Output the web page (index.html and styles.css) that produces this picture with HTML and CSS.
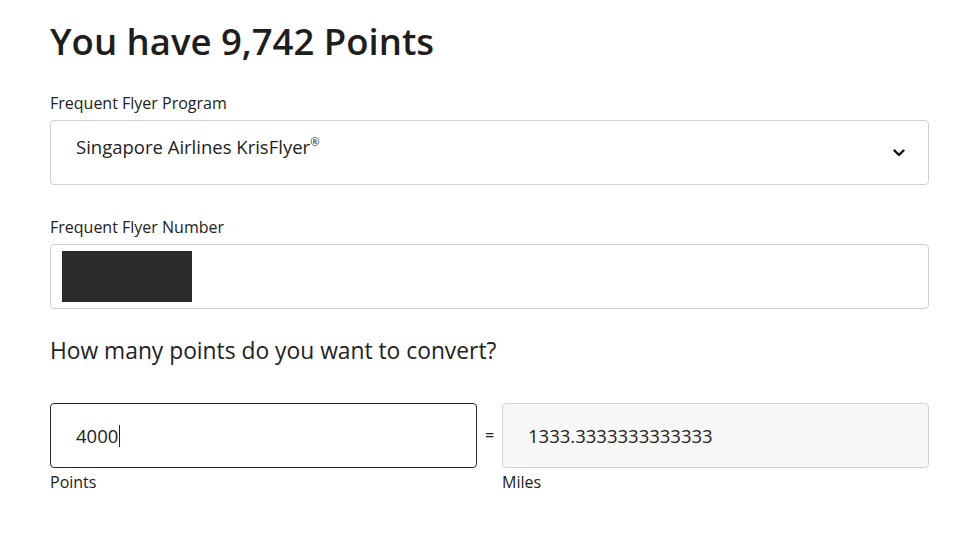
FILE: index.html
```html
<!DOCTYPE html>
<html>
<head>
<meta charset="utf-8">
<link rel="stylesheet" href="styles.css">
</head>
<body>
<main class="form">
  <h1 class="title">You have 9,742 Points</h1>

  <div class="field">
    <label class="label">Frequent Flyer Program</label>
    <div class="box select">
      <span class="value">Singapore Airlines KrisFlyer<sup class="reg">®</sup></span>
      <svg class="chev" width="12" height="8" viewBox="0 0 12 8"><path d="M1.5 1.5 L6 6 L10.5 1.5" fill="none" stroke="#111" stroke-width="2.4" stroke-linecap="round" stroke-linejoin="round"/></svg>
    </div>
  </div>

  <div class="field">
    <label class="label">Frequent Flyer Number</label>
    <div class="box number">
      <div class="redact"></div>
    </div>
  </div>

  <h2 class="question">How many points do you want to convert?</h2>

  <div class="convert">
    <div class="col">
      <div class="box active"><span class="value">4000</span><span class="caret"></span></div>
      <div class="sub">Points</div>
    </div>
    <div class="eq">=</div>
    <div class="col">
      <div class="box readonly"><span class="value">1333.3333333333333</span></div>
      <div class="sub">Miles</div>
    </div>
  </div>
</main>
</body>
</html>
```
FILE: styles.css
```css
* { box-sizing: border-box; }
body {
  margin: 0;
  background: #fff;
  color: #222;
  font-family: "Open Sans", "Lato", sans-serif;
}
.form {
  width: 879px;
  margin-left: 50px;
  padding-top: 17px;
}
.title {
  margin: 0;
  font-size: 36.5px;
  line-height: 48px;
  font-weight: 600;
  color: #1e1e1e;
}
.field { margin-top: 28px; }
.field + .field { margin-top: 32px; }
.label {
  display: block;
  font-size: 16px;
  line-height: 20px;
  margin-bottom: 7px;
}
.box {
  height: 65px;
  border: 1px solid #cfcfcf;
  border-radius: 4px;
  display: flex;
  align-items: center;
  padding-left: 25px;
  font-size: 18.5px;
}
.select { justify-content: space-between; padding-right: 23px; padding-bottom: 11px; }
.value { line-height: 22px; }
.reg { font-size: 11px; vertical-align: 8px; line-height: 0; }
.chev { margin-top: 11px; }
.number { padding-left: 11px; }
.redact {
  width: 130px;
  height: 51px;
  background: #2b2b2d;
}
.question {
  margin: 28px 0 0;
  font-size: 22.8px;
  line-height: 28px;
  font-weight: 400;
}
.convert {
  margin-top: 38px;
  display: flex;
  align-items: flex-start;
}
.col { flex: 1; }
.active { border-color: #2a2a2a; }
.readonly { background: #f7f7f7; border-color: #d2d2d2; }
.caret {
  width: 1px;
  height: 22px;
  background: #222;
  margin-left: 1px;
}
.eq {
  width: 25px;
  text-align: center;
  font-size: 16px;
  line-height: 65px;
}
.sub {
  font-size: 16px;
  line-height: 20px;
  margin-top: 4px;
}
```
